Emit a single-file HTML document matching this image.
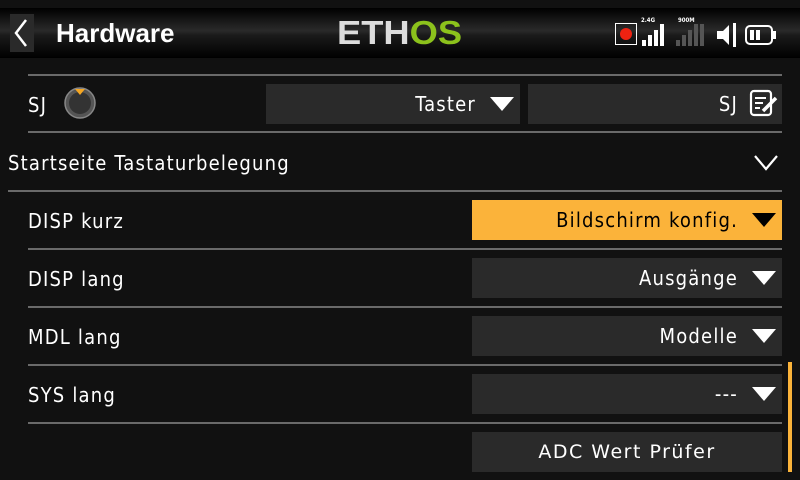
<!DOCTYPE html>
<html><head><meta charset="utf-8"><style>
*{margin:0;padding:0;box-sizing:border-box}
body{width:800px;height:480px;background:#111;position:relative;overflow:hidden;font-family:"DejaVu Sans Condensed","DejaVu Sans","Liberation Sans",sans-serif;color:#fff}
.a{position:absolute}
.hdr{left:0;top:8px;width:800px;height:50px;background:linear-gradient(#000 0%,#2a2a2a 45%,#1a1a1a 55%,#000 100%)}
.line{height:2px;background:#6a6a6a}
.lbl{font-size:20px;line-height:24px;letter-spacing:1.2px}
.box{background:#2a2a2a;height:40px;font-size:20px;line-height:40px;text-align:right;padding-right:44px;letter-spacing:1.2px}
.tri{position:absolute;right:6px;top:13px;width:0;height:0;border-left:12px solid transparent;border-right:12px solid transparent;border-top:14px solid #fff}
</style></head><body>
<div class="a hdr"></div>
<div class="a" style="left:10px;top:14px;width:24px;height:38px;background:#2a2a2a"></div>
<svg class="a" style="left:10px;top:14px" width="24" height="38"><polyline points="16,6 6,19 16,32" fill="none" stroke="#fff" stroke-width="2.5"/></svg>
<div class="a" style="left:56px;top:17px;font-family:'Liberation Sans',sans-serif;font-weight:bold;font-size:26px;line-height:32px">Hardware</div>
<div class="a" style="left:337px;top:14px;font-family:'Liberation Sans',sans-serif;font-weight:bold;font-size:33px;line-height:38px;letter-spacing:0px;transform:scaleX(1.1);transform-origin:left"><span style="color:#ddd">ETH</span><span style="color:#8cc21c">OS</span></div>
<div class="a" style="left:615px;top:23px;width:22px;height:22px;border:1.5px solid #fff"></div>
<div class="a" style="left:620px;top:28px;width:12px;height:12px;border-radius:50%;background:#e21"></div>
<div class="a" style="left:641px;top:17px;font-size:6px;font-weight:bold">2.4G</div>
<div class="a" style="left:678px;top:17px;font-size:6px;font-weight:bold">900M</div>
<svg class="a" style="left:640px;top:22px" width="160" height="26">
<rect x="2" y="18" width="4" height="6" fill="#fff"/><rect x="8" y="13" width="4" height="11" fill="#fff"/><rect x="14" y="8" width="4" height="16" fill="#fff"/><rect x="20" y="2" width="4" height="22" fill="#fff"/>
<rect x="36" y="18" width="4" height="6" fill="#555"/><rect x="42" y="13" width="4" height="11" fill="#555"/><rect x="48" y="8" width="4" height="16" fill="#555"/><rect x="54" y="2" width="4" height="22" fill="#555"/><rect x="60" y="2" width="4" height="22" fill="#555"/>
<polygon points="77,9 83,9 89,3 89,23 83,17 77,17" fill="#fff"/><rect x="93" y="1" width="3" height="24" fill="#fff"/>
<rect x="106" y="4" width="26" height="18" rx="4" fill="none" stroke="#fff" stroke-width="2"/><rect x="133" y="9" width="3" height="8" fill="#fff"/><rect x="110" y="8" width="4" height="10" fill="#fff"/><rect x="116" y="8" width="4" height="10" fill="#fff"/>
</svg>
<div class="a line" style="left:28px;top:74px;width:754px"></div>
<div class="a lbl" style="left:28px;top:93px">SJ</div>
<svg class="a" style="left:63px;top:86px" width="34" height="34"><circle cx="17" cy="17" r="15" fill="#555" stroke="#888" stroke-width="1.5"/><circle cx="17" cy="17" r="11" fill="#333"/><polygon points="12,3 22,3 17,9" fill="#f5a623"/></svg>
<div class="a box" style="left:266px;top:84px;width:254px">Taster<div class="tri"></div></div>
<div class="a box" style="left:528px;top:84px;width:254px">SJ</div>
<svg class="a" style="left:749px;top:89px" width="30" height="30"><rect x="2" y="2" width="20" height="24" rx="3" fill="none" stroke="#fff" stroke-width="2.2"/><line x1="6" y1="9" x2="17" y2="9" stroke="#fff" stroke-width="2"/><line x1="6" y1="14" x2="14" y2="14" stroke="#fff" stroke-width="2"/><line x1="6" y1="19" x2="11" y2="19" stroke="#fff" stroke-width="2"/><line x1="14" y1="22" x2="27" y2="9" stroke="#fff" stroke-width="3.5"/></svg>
<div class="a line" style="left:28px;top:131px;width:754px"></div>
<div class="a lbl" style="left:8px;top:151px">Startseite Tastaturbelegung</div>
<svg class="a" style="left:753px;top:153px" width="28" height="20"><polyline points="2,3 13,16 24,3" fill="none" stroke="#fff" stroke-width="2.2"/></svg>
<div class="a line" style="left:8px;top:190px;width:774px"></div>
<div class="a lbl" style="left:28px;top:209px">DISP kurz</div>
<div class="a box" style="left:472px;top:200px;width:310px;background:#fbb33a;color:#000">Bildschirm konfig.<div class="tri" style="border-top-color:#000"></div></div>
<div class="a line" style="left:28px;top:248px;width:754px"></div>
<div class="a lbl" style="left:28px;top:267px">DISP lang</div>
<div class="a box" style="left:472px;top:258px;width:310px">Ausgänge<div class="tri"></div></div>
<div class="a line" style="left:28px;top:306px;width:754px"></div>
<div class="a lbl" style="left:28px;top:325px">MDL lang</div>
<div class="a box" style="left:472px;top:316px;width:310px">Modelle<div class="tri"></div></div>
<div class="a line" style="left:28px;top:364px;width:754px"></div>
<div class="a lbl" style="left:28px;top:383px">SYS lang</div>
<div class="a box" style="left:472px;top:374px;width:310px">---<div class="tri"></div></div>
<div class="a line" style="left:28px;top:422px;width:754px"></div>
<div class="a box" style="left:472px;top:432px;width:310px;text-align:center;padding:0;letter-spacing:1.5px;font-family:'DejaVu Sans',sans-serif;font-size:19px">ADC Wert Prüfer</div>
<div class="a" style="left:788px;top:362px;width:4px;height:110px;background:#fbb33a"></div>
</body></html>
